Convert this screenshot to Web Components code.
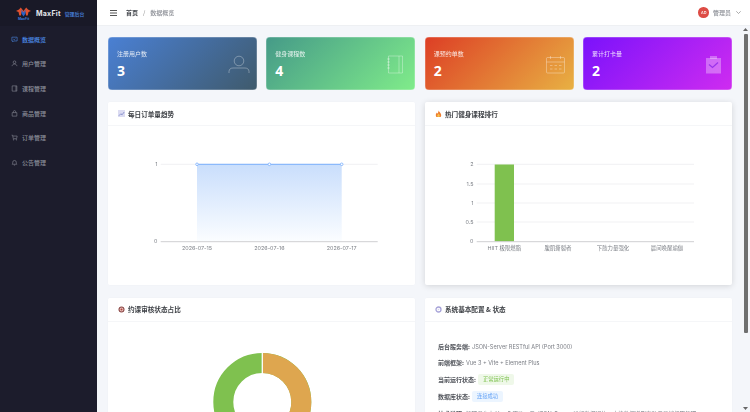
<!DOCTYPE html>
<html lang="zh"><head><meta charset="utf-8"><title>MaxFit</title>
<style>
html,body{margin:0;height:412px;overflow:hidden;background:#f4f6fa;font-family:Inter,"Noto Sans CJK SC",sans-serif}
app-shell{width:750px;height:412px;filter:blur(.3px)}
</style></head><body>
<app-shell>
  <side-nav slot="side">
    <nav-item active icon="monitor">数据概览</nav-item>
    <nav-item icon="user">用户管理</nav-item>
    <nav-item icon="book">课程管理</nav-item>
    <nav-item icon="bag">商品管理</nav-item>
    <nav-item icon="cart">订单管理</nav-item>
    <nav-item icon="bell">公告管理</nav-item>
  </side-nav>
  <top-bar slot="top"></top-bar>
  <stat-row>
    <stat-card label="注册用户数" value="3" icon="user" from="#4a80d4" to="#3f5a6c"></stat-card>
    <stat-card label="健身课程数" value="4" icon="note" from="#459a88" to="#80ec8a"></stat-card>
    <stat-card label="课预约单数" value="2" icon="cal" from="#dd3e25" to="#e8b143"></stat-card>
    <stat-card label="累计打卡量" value="2" icon="clip" from="#7a12fb" to="#cf2cf0"></stat-card>
  </stat-row>
  <panel-grid>
    <dash-panel heading="每日订单量趋势" icon="chart"><line-chart></line-chart></dash-panel>
    <dash-panel heading="热门健身课程排行" icon="fire" raised><bar-chart></bar-chart></dash-panel>
    <dash-panel heading="约课审核状态占比" icon="target"><donut-chart></donut-chart></dash-panel>
    <dash-panel heading="系统基本配置 &amp; 状态" icon="gear"><status-info></status-info></dash-panel>
  </panel-grid>
</app-shell>
<script>
const ICONS={
 monitor:'<path d="M1.500 2h9v6.500h-6L3 10V8.500H1.500z"/><path d="M4 5.500l1.500 1 2-2"/>',
 user:'<circle cx="6" cy="3.800" r="2.300"/><path d="M1.800 10.500c.4-2.600 2.200-3.600 4.200-3.600s3.800 1 4.200 3.600"/>',
 book:'<path d="M2 1.500h8v9H2zM8.500 1.500v9"/>',
 bag:'<path d="M2 4.500h8v6H2zM4 4.500V3a2 2 0 014 0v1.500"/>',
 cart:'<path d="M1 2h1.700l1.200 6h5.700l1-4.500H3.100"/><circle cx="4.500" cy="10" r=".6"/><circle cx="9" cy="10" r=".6"/>',
 bell:'<path d="M2 9h8c-1-1-1-2-1-3.500a3 3 0 00-6 0C3 7 3 8 2 9zM5 10.500h2"/>'
};
function def(name,css,html,extra={}){
  const t=document.createElement('template');
  t.innerHTML=`<style>${css}</style>${html}`;
  customElements.define(name,class extends HTMLElement{
    constructor(){super();this.attachShadow({mode:'open'}).appendChild(t.content.cloneNode(true));}
    connectedCallback(){extra.init&&extra.init.call(this,this.shadowRoot);}
  });
}
def('app-shell',`
:host{display:grid;grid-template-columns:97px 1fr;grid-template-rows:26px 1fr}
.side{grid-row:1/3;display:flex;min-height:0}
.top{display:flex;min-width:0}
.rest{display:flex;min-height:0;min-width:0;overflow:hidden}
.content{flex:1;min-width:0;padding:11px 9px 0 11px;overflow:hidden}
.bar{flex:0 0 9px;width:9px;background:#f4f6fa;display:flex;flex-direction:column;align-items:center}
.arrow{flex:0 0 7px;display:flex;align-items:center;justify-content:center}
.thumb{width:4px;height:299px;margin-top:1px;background:#6f6f6f;border-radius:1px}
.grow{flex:1}
`,`<div class="side"><slot name="side"></slot></div><div class="top"><slot name="top"></slot></div>
<div class="rest"><div class="content"><slot></slot></div>
<div class="bar"><div class="arrow"><svg width="5" height="3"><path d="M2.500 0L5 3H0z" fill="#666"/></svg></div><div class="thumb"></div><div class="grow"></div><div class="arrow"><svg width="5" height="3"><path d="M2.500 3L5 0H0z" fill="#666"/></svg></div></div></div>`);

def('side-nav',`
:host{display:flex;flex-direction:column;flex:1;background:#1c1c2c;min-width:0;overflow:hidden}
.head{height:26px;flex:none;background:#191927;display:flex;align-items:center;padding-left:16px;gap:5px;box-sizing:border-box}
.logo{width:15px;height:13px;display:block}
.name{color:#e4e6ec;font:700 7px Inter,"Noto Sans CJK SC",sans-serif;letter-spacing:.25px}
.sub{color:#4a86e0;font:500 4.900px "Noto Sans CJK SC",sans-serif;margin-left:-1px;margin-top:1px}
.menu{display:flex;flex-direction:column;padding-top:1px}
`,`<div class="head">
<svg class="logo" viewBox="0 0 15 13"><path d="M0 4l3-1.500 1.800-2L7.500 4 10.200.5 12 2.500 15 4l-2.500 1-.8 3.500H10L9.500 5 7.500 8 5.500 5 5 8.500H3.300L2.500 5z" fill="#e2512f"/><path d="M5.500 2.500l2 3 2-3v4l-2 3-2-3z" fill="#2a62c8"/><text x="7.500" y="12.700" text-anchor="middle" font-size="3.400" font-weight="700" fill="#3c78dc" font-family="Inter,sans-serif">MaxFit</text></svg>
<span class="name">MaxFit</span><span class="sub">管理后台</span></div>
<div class="menu"><slot></slot></div>`);

def('nav-item',`
:host{display:flex;align-items:center;height:24.600px;padding-left:11px;gap:4px;color:#8b8e99;font:500 6px "Noto Sans CJK SC",sans-serif}
:host([active]){color:#4c8ceb}
svg{width:7px;height:7px;flex:none;fill:none;stroke:currentColor;stroke-width:1}
`,`<svg viewBox="0 0 12 12"></svg><slot></slot>`,{init(r){r.querySelector('svg').innerHTML=ICONS[this.getAttribute('icon')];}});

def('top-bar',`
:host{display:flex;flex:1;align-items:center;background:#fff;border-bottom:1px solid #eef0f3;box-sizing:border-box;padding:0 9.500px 0 13px;font:500 6px "Noto Sans CJK SC",sans-serif;color:#8a8d94}
.ham{width:7px;height:6px;margin-right:9px;display:block}
b{color:#44474d;font-weight:700}
.sep{margin:0 5px 0 5px;color:#999}
.grow{flex:1}
.av{width:10.500px;height:10.500px;border-radius:50%;background:#dd4c45;color:#fff;font:500 3.800px Inter,sans-serif;display:flex;align-items:center;justify-content:center;margin-right:4px}
.ch{width:5px;height:3px;margin-left:4.500px;display:block}
`,`<svg class="ham" viewBox="0 0 7 6"><path d="M0 .5h7M0 3h7M0 5.500h7" stroke="#555" stroke-width="1"/></svg>
<b>首页</b><span class="sep">/</span><span>数据概览</span><span class="grow"></span>
<span class="av">AD</span><span>管理员</span><svg class="ch" viewBox="0 0 5 3"><path d="M.3.3L2.500 2.500 4.700.3" fill="none" stroke="#888" stroke-width=".7"/></svg>`);

def('stat-row',`:host{display:grid;grid-template-columns:repeat(4,minmax(0,1fr));column-gap:9.300px;margin-bottom:12px}`,`<slot></slot>`);
const CARD={
 user:'<circle cx="11" cy="6" r="4.800"/><path d="M1 18v-1.500C1 14 3 13 5 13h12c2 0 4 1 4 3.500V18"/>',
 note:'<path d="M2.500 1h14v17h-14zM13 1v17"/><g fill="currentColor" stroke="none"><circle cx="2.500" cy="4" r="1.200"/><circle cx="2.500" cy="7" r="1.200"/><circle cx="2.500" cy="10" r="1.200"/><circle cx="2.500" cy="13" r="1.200"/></g>',
 cal:'<rect x="1.500" y="2.500" width="18" height="15.500" rx="1"/><path d="M1.500 7h18M5.500 1v3M15.500 1v3M5 10.500h2.500M9.500 10.500H12M14 10.500h2.500M5 14h2.500M9.500 14H12M14 14h2.500"/>',
 clip:'<path d="M3 3h15v15.500H3z" fill="currentColor" stroke="none"/><path d="M7 1h7v3H7z" fill="currentColor" stroke="none"/><path d="M6 9.500l3.500 3L15 7.500" stroke="rgba(130,30,230,.7)" stroke-width="1.300"/>'
};
def('stat-card',`
:host{display:block;height:53px;box-sizing:border-box;border-radius:4px;padding:13px 0 0 9px;color:#fff;position:relative;background:linear-gradient(135deg,var(--from),var(--to));box-shadow:0 0 0 .5px rgba(255,255,255,.4) inset}
.l{font:400 6px/8px "Noto Sans CJK SC",sans-serif;opacity:.85}
.v{font:700 14px/16px "Open Sans",Inter,sans-serif;margin-top:5px}
svg{position:absolute;right:7px;top:18px;width:22px;height:19px;fill:none;stroke:currentColor;stroke-width:1;color:rgba(255,255,255,.32)}
`,`<div class="l"></div><div class="v"></div><svg viewBox="0 0 22 19"></svg>`,{init(r){
 this.style.setProperty('--from',this.getAttribute('from'));this.style.setProperty('--to',this.getAttribute('to'));
 r.querySelector('.l').textContent=this.getAttribute('label');r.querySelector('.v').textContent=this.getAttribute('value');
 r.querySelector('svg').innerHTML=CARD[this.getAttribute('icon')];}});

def('panel-grid',`:host{display:grid;grid-template-columns:repeat(2,minmax(0,1fr));gap:12.500px 10px}`,`<slot></slot>`);
const PI={
 chart:'<rect width="7" height="7" fill="#dcdcf2"/><path d="M.8 5.800l2-2 1.300 1L6.200 2" stroke="#7b86c8" fill="none" stroke-width=".8"/>',
 fire:'<path d="M3.500 .2C4 2 6.200 3 6.200 5a2.700 2.700 0 01-5.400 0C.8 3.800 1.500 3 2 2.500c.1.800.4 1 .7 1C3 2.800 3.800 1.500 3.500.2z" fill="#ee7d2f"/><path d="M3.500 3.500c.3.700 1.300 1.200 1.300 2.200a1.300 1.300 0 01-2.600 0c0-.8.900-1.300 1.300-2.200z" fill="#f6c24a"/>',
 target:'<circle cx="3.500" cy="3.500" r="3" fill="#8e4a48"/><circle cx="3.500" cy="3.500" r="1.900" fill="#e7c4c0"/><circle cx="3.500" cy="3.500" r="1" fill="#b5403a"/>',
 gear:'<circle cx="3.500" cy="3.500" r="2.500" fill="none" stroke="#a7a3d8" stroke-width="1.300"/><circle cx="3.500" cy="3.500" r=".8" fill="#d5d3ec"/>'
};
def('dash-panel',`
:host{display:block;background:#fff;border-radius:2px;box-shadow:0 0 2px rgba(0,0,0,.03);min-width:0;overflow:hidden}
:host([raised]){box-shadow:0 1px 6px rgba(0,0,0,.14);overflow:visible}
.h{height:24px;box-sizing:border-box;border-bottom:1px solid #f5f6f8;display:flex;align-items:center;padding-left:10px;gap:3px;font:700 6.600px "Noto Sans CJK SC",sans-serif;color:#3f4247}
svg{width:7px;height:7px;flex:none}
`,`<div class="h"><svg viewBox="0 0 7 7"></svg><span></span></div><slot></slot>`,{init(r){
 r.querySelector('span').textContent=this.getAttribute('heading');r.querySelector('svg').innerHTML=PI[this.getAttribute('icon')];}});

const chartCss=`:host{display:block;height:159px}svg{display:block;width:100%;height:100%}text{font:400 5.400px Inter,"Noto Sans CJK SC",sans-serif;fill:#7d8087}`;
def('line-chart',chartCss,`<svg viewBox="0 0 307 159">
<defs><linearGradient id="a" x1="0" y1="0" x2="0" y2="1"><stop offset="0" stop-color="#c9defc"/><stop offset="1" stop-color="#fbfdff"/></linearGradient></defs>
<path d="M52.700 38.300H269.700" stroke="#f1f1f3"/>
<rect x="89" y="38.300" width="144.700" height="77.200" fill="url(#a)"/>
<path d="M52.700 115.700H269.700" stroke="#cfcfd2"/>
<path d="M89 38.300H233.700" stroke="#79aefc"/>
<g fill="#fff" stroke="#79aefc" stroke-width=".8"><circle cx="89" cy="38.300" r="1.300"/><circle cx="161.400" cy="38.300" r="1.300"/><circle cx="233.700" cy="38.300" r="1.300"/></g>
<text x="49.500" y="40" text-anchor="end">1</text><text x="49.500" y="117" text-anchor="end">0</text>
<text x="89" y="123.500" text-anchor="middle">2026-07-15</text><text x="161.400" y="123.500" text-anchor="middle">2026-07-16</text><text x="233.700" y="123.500" text-anchor="middle">2026-07-17</text>
</svg>`);
def('bar-chart',chartCss,`<svg viewBox="0 0 307 159">
<g stroke="#f1f1f3"><path d="M51.700 38.300H269M51.700 58H269M51.700 77H269M51.700 96H269"/></g>
<rect x="69.700" y="38.500" width="19.300" height="77" fill="#7fc14f"/>
<path d="M51.700 115.700H269" stroke="#cfcfd2"/>
<g text-anchor="end"><text x="48.500" y="40">2</text><text x="48.500" y="59.500">1.5</text><text x="48.500" y="78.500">1</text><text x="48.500" y="97.500">0.5</text><text x="48.500" y="117">0</text></g>
<g text-anchor="middle"><text x="79.300" y="123.500">HIIT 极限燃脂</text><text x="133" y="123.500">腹肌撕裂者</text><text x="188" y="123.500">下肢力量强化</text><text x="242" y="123.500">晨间唤醒瑜伽</text></g>
</svg>`);
def('donut-chart',`:host{display:block;height:159px}svg{display:block;width:100%;height:100%}`,`<svg viewBox="0 0 307 159">
<circle cx="154.300" cy="80" r="39" fill="none" stroke="#7fc14f" stroke-width="20"/>
<path d="M154.300 31a49 49 0 010 98V109a29 29 0 000-58z" fill="#dea64f"/>
<path d="M154.300 30v100" stroke="#fff" stroke-width="1.300"/>
</svg>`);
def('status-info',`
:host{display:block;padding:21px 13px 0 13px;font:400 5.600px/8px Inter,"Noto Sans CJK SC",sans-serif;color:#7a7d84;white-space:nowrap;overflow:hidden}
p{margin:0 0 8.500px;display:flex;align-items:center;height:8px}
b{font:700 6px/8px "Noto Sans CJK SC",sans-serif;color:#50535a;margin-right:2px;flex:none}
.tag{height:11px;line-height:11px;padding:0 5px;border-radius:2px;font:400 5.300px/11px "Noto Sans CJK SC",sans-serif}
.ok{background:#eff8e9;color:#80c353}.info{background:#ecf5ff;color:#5b9df5}
`,`<p><b>后台服务端:</b>JSON-Server RESTful API (Port 3000)</p>
<p><b>前端框架:</b>Vue 3 + Vite + Element Plus</p>
<p><b>当前运行状态:</b><span class="tag ok">正常运行中</span></p>
<p style="margin-top:9px"><b>数据库状态:</b><span class="tag info">连接成功</span></p>
<p style="margin-top:9px"><b>技术说明:</b>管理后台由 Vue 3 驱动，与 JSON-Server 进行数据通信，支持数据增删查改与后端权限管理</p>`);
</script>
</body></html>
